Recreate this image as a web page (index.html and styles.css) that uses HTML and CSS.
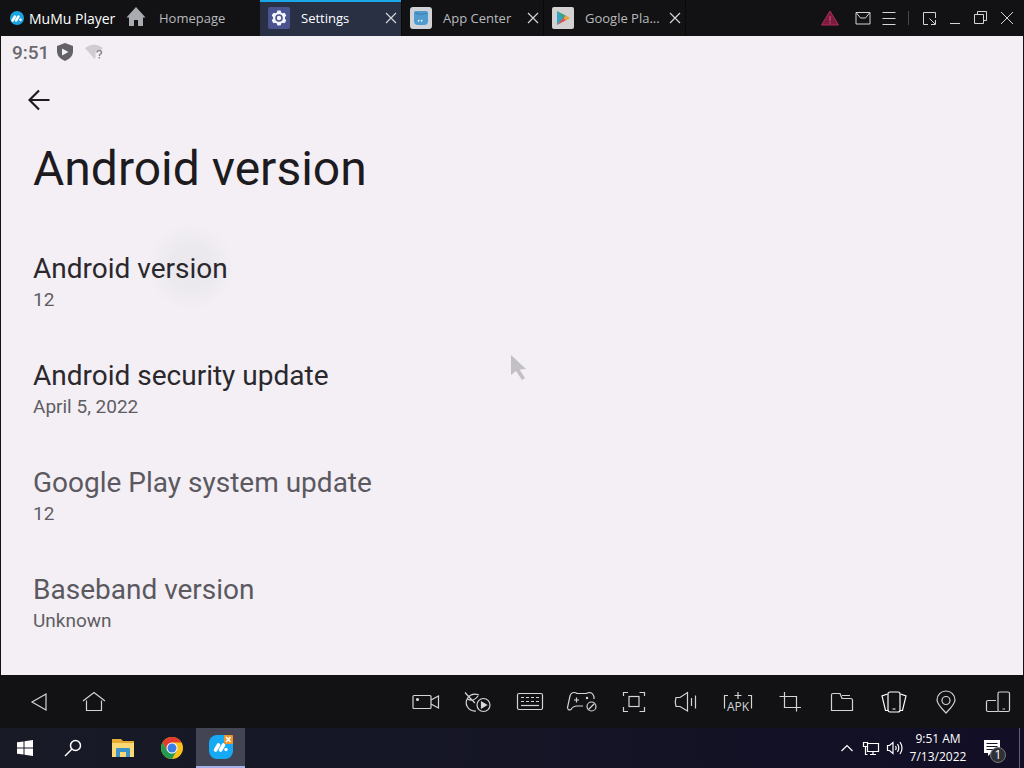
FILE: index.html
```html
<!DOCTYPE html>
<html lang="en">
<head>
<meta charset="utf-8">
<meta name="viewport" content="width=device-width, initial-scale=1">
<title>MuMu Player</title>
<link rel="stylesheet" href="styles.css">
</head>
<body>
<div class="desktop">
  <header class="titlebar">
    <div class="brand">
      <svg width="16" height="16" viewBox="0 0 16 16" aria-hidden="true"><circle cx="8" cy="8" r="7" fill="#1aa6e2"/><path d="M3.500 10.500 6 6.500M7 10.500 9.500 6.500" stroke="#fff" stroke-width="2.400" stroke-linecap="round"/><circle cx="11.500" cy="9.800" r="1.300" fill="#fff"/></svg>
      <span>MuMu Player</span>
    </div>
    <nav class="tabs" aria-label="Tabs">
      <div class="tab tab-home">
        <button class="tab-main tab-main-home" type="button">
          <svg width="20" height="22" viewBox="0 0 20 22" aria-hidden="true"><path d="M10 0 .5 10.500H3V19H8V13H12V19H17V10.500H19.500Z" fill="#a9abb0"/></svg>
          <span>Homepage</span>
        </button>
      </div>
      <div class="tab tab-active">
        <button class="tab-main" type="button">
          <svg width="22" height="22" viewBox="0 0 22 22" aria-hidden="true"><rect width="22" height="22" rx="2" fill="#4a5390"/><g fill="#f4f5fb"><circle cx="11" cy="11" r="6"/><rect x="9" y="3.500" width="4" height="15" rx="1"/><rect x="9" y="3.500" width="4" height="15" rx="1" transform="rotate(60 11 11)"/><rect x="9" y="3.500" width="4" height="15" rx="1" transform="rotate(120 11 11)"/></g><circle cx="11" cy="11" r="3" fill="#f4f5fb" stroke="#4a5390" stroke-width="1.600"/></svg>
          <span>Settings</span>
        </button>
        <button class="tab-close" type="button" aria-label="Close Settings"><svg width="12" height="12" viewBox="0 0 12 12"><path d="M1 1 11 11M11 1 1 11"/></svg></button>
      </div>
      <div class="tab">
        <button class="tab-main" type="button">
          <svg width="22" height="22" viewBox="0 0 22 22" aria-hidden="true"><rect width="22" height="22" rx="3" fill="#cfd3d8"/><path d="M4 6Q4 4 6 4H16Q18 4 18 6V14Q18 18 14 18H8Q4 18 4 14Z" fill="#4f9bcd"/><path d="M5 6Q11 9 17 6" fill="none" stroke="#3a7fb5"/><path d="M8 14.500 9.300 13M11 14.500 12.300 13" stroke="#d8eefa" stroke-width="1.500"/></svg>
          <span>App Center</span>
        </button>
        <button class="tab-close" type="button" aria-label="Close App Center"><svg width="12" height="12" viewBox="0 0 12 12"><path d="M1 1 11 11M11 1 1 11"/></svg></button>
      </div>
      <div class="tab">
        <button class="tab-main" type="button">
          <svg width="22" height="22" viewBox="0 0 22 22" aria-hidden="true"><rect width="22" height="22" rx="2" fill="#d3d1d2"/><path d="M5 4V18L12.500 11Z" fill="#35a3c4"/><path d="M5 4 14 8.800 11.500 11.500Z" fill="#3aa37a"/><path d="M5 18 14 13.200 11.500 10.500Z" fill="#d4574e"/><path d="M14 8.600 18 11 14 13.400 11.500 11Z" fill="#e5a53a"/></svg>
          <span>Google Pla...</span>
        </button>
        <button class="tab-close" type="button" aria-label="Close Google Play"><svg width="12" height="12" viewBox="0 0 12 12"><path d="M1 1 11 11M11 1 1 11"/></svg></button>
      </div>
    </nav>
    <div class="window-tools">
      <button class="tool tool-alert" type="button" aria-label="Warning"><svg width="20" height="18" viewBox="0 0 20 18"><path d="M10 2 18.500 16H1.500Z"/><path d="M10 7V12M10 13V14.500" class="alert-mark"/></svg></button>
      <button class="tool" type="button" aria-label="Messages"><svg width="18" height="16" viewBox="0 0 18 16"><path d="M2 2.500H16V14H2ZM2.500 3 6.500 8H11.500L15.500 3"/></svg></button>
      <button class="tool" type="button" aria-label="Menu"><svg width="16" height="16" viewBox="0 0 16 16"><path d="M1.500 2.500H14.500M1.500 8.500H14.500M1.500 14.500H14.500"/></svg></button>
      <span class="tool-sep"></span>
      <button class="tool" type="button" aria-label="Resize"><svg width="16" height="16" viewBox="0 0 16 16"><path d="M7 14.500H2.500V2.500H14.500V8M8.500 8.500 14 14M14.500 10V14.500H10"/></svg></button>
      <button class="tool" type="button" aria-label="Minimize"><svg width="16" height="16" viewBox="0 0 16 16"><path d="M3 13.500H13"/></svg></button>
      <button class="tool" type="button" aria-label="Restore"><svg width="16" height="16" viewBox="0 0 16 16"><path d="M1.500 4.500H10.500V13.500H1.500ZM4.500 4V1.500H13.500V10.500H11"/></svg></button>
      <button class="tool" type="button" aria-label="Close"><svg width="16" height="16" viewBox="0 0 16 16"><path d="M2 2 14 14M14 2 2 14"/></svg></button>
    </div>
  </header>

  <main class="screen">
    <div class="status">
      <span>9:51</span>
      <svg width="16" height="18" viewBox="0 0 16 18" aria-hidden="true"><path d="M8 0 16 3V9Q15.500 15 8 18 .5 15 0 9V3Z" fill="#626166"/><path d="M5 5.500V12.500L11.500 9Z" fill="#f3eff5"/></svg>
      <svg width="18" height="16" viewBox="0 0 18 16" aria-hidden="true"><path d="M0 4Q9-3 18 4L16 6Q11 5 10.500 9V13.500L9.500 15Z" fill="#cfcdd1"/><path d="M12 8.500Q12 6.500 14.200 6.500 16.500 6.500 16.500 8.500 16.500 9.700 15 10.500 14.300 11 14.300 12M14.300 13V14.500" fill="none" stroke="#88878b" stroke-width="1.500"/></svg>
    </div>
    <button class="back" type="button" aria-label="Back"><svg width="22" height="22" viewBox="0 0 22 22"><path d="M11 1.500 1.500 11 11 20.500M1.500 11H21.500" fill="none" stroke="#1d1b20" stroke-width="2.200"/></svg></button>
    <h1 class="title">Android version</h1>
    <dl class="list">
      <div class="row"><dt>Android version</dt><dd>12</dd></div>
      <div class="row"><dt>Android security update</dt><dd>April 5, 2022</dd></div>
      <div class="row row-muted"><dt>Google Play system update</dt><dd>12</dd></div>
      <div class="row row-muted"><dt>Baseband version</dt><dd>Unknown</dd></div>
    </dl>
    <svg class="pointer" width="20" height="28" viewBox="0 0 20 28" aria-hidden="true"><path d="M2 1V21L7 17 13 26 16 24 10.500 15.500 17 15Z" fill="#c2c0c4"/></svg>
  </main>

  <footer class="toolbar">
    <div class="nav-tools">
      <button class="nav-button" type="button" aria-label="Back"><svg width="18" height="20" viewBox="0 0 18 20"><path d="M16 2V18L2 10Z"/></svg></button>
      <button class="nav-button" type="button" aria-label="Home"><svg width="24" height="22" viewBox="0 0 24 22"><path d="M1 10 12 1.500 23 10M4.500 9.500V19.500H19.500V9.500"/></svg></button>
    </div>
    <div class="device-tools">
      <button type="button" aria-label="Record video"><svg width="30" height="26" viewBox="0 0 30 26"><rect x="2" y="6.500" width="18" height="13" rx="1"/><path d="M20 11 27.500 7V19L20 15"/><circle cx="6.500" cy="10.500" r="1" fill="#e0e0e0"/></svg></button>
      <button type="button" aria-label="Operation recorder"><svg width="30" height="26" viewBox="0 0 30 26"><path d="M2 3.500 6 8M16 6Q9 3.500 5 8.500 1.500 13.500 4.500 18 7.500 22.500 13 22M4.500 10Q10 13.500 15 7M6 8 12 14"/><circle cx="20.500" cy="16" r="6.500"/><path d="M18.500 13V19L23.500 16Z" fill="#e0e0e0"/></svg></button>
      <button type="button" aria-label="Keyboard"><svg width="30" height="26" viewBox="0 0 30 26"><rect x="2.500" y="4.500" width="25" height="16" rx="1.500"/><path d="M6 8.500H24M6 12.500H24" stroke-dasharray="3 2"/><path d="M6 16.500H24"/></svg></button>
      <button type="button" aria-label="Gamepad"><svg width="32" height="26" viewBox="0 0 32 26"><path d="M17 17H11Q7 17 5 20.500 2 22 1.500 18.500L4 7Q5 3.500 8 3.500 10 3.500 11 4.500H20Q22 3.500 24 3.500 27 4 28 8V10M8 11H13M10.500 8.500V13.500"/><circle cx="21" cy="9" r=".6"/><circle cx="25.500" cy="17.500" r="4.500"/><path d="M22.500 20.500 28.500 14.500"/></svg></button>
      <button type="button" aria-label="Full screen"><svg width="26" height="26" viewBox="0 0 26 26"><rect x="8" y="7.500" width="10" height="10"/><path d="M2.500 7V3.500H7M18.500 3.500H23.500V7M2.500 18V22.500H7M18.500 22.500H23.500V18"/></svg></button>
      <button type="button" aria-label="Volume"><svg width="26" height="26" viewBox="0 0 26 26"><path d="M3 8.500H7L14.500 3.500V22L7 17.500H3Q1.500 13 3 8.500ZM18.500 9V17M22.500 6.500V19.500"/></svg></button>
      <button type="button" aria-label="Install APK"><svg width="30" height="26" viewBox="0 0 30 26"><path d="M5 6.500H1.500V19.500M25 6.500H28.500V19.500M11.500 6.500H18.500M15 3V10"/><text x="15" y="22" text-anchor="middle">APK</text></svg></button>
      <button type="button" aria-label="Screenshot"><svg width="26" height="26" viewBox="0 0 26 26"><path d="M2.500 7.500H19.500V22.500M7.500 3V18.500H24"/></svg></button>
      <button type="button" aria-label="Shared folder"><svg width="26" height="26" viewBox="0 0 26 26"><path d="M2.500 21.500V6Q2.500 4.500 4 4.500H11L13 9.500H21.500Q23.500 9.500 23.500 11V21.500ZM13 6.500H21"/></svg></button>
      <button type="button" aria-label="Shake"><svg class="bright" width="28" height="26" viewBox="0 0 28 26"><rect x="8" y="3" width="12" height="20" rx="2"/><path d="M12.500 20H15.500M7.500 5 2 7 5.500 21.500H8M20.500 5 26 7 22.500 21.500H20"/></svg></button>
      <button type="button" aria-label="Location"><svg width="24" height="26" viewBox="0 0 24 26"><path d="M12 24Q3 15 3 11A9 9 0 0 1 21 11Q21 15 12 24Z"/><circle cx="12" cy="11.500" r="4"/></svg></button>
      <button type="button" aria-label="Rotate"><svg width="26" height="26" viewBox="0 0 26 26"><rect x="13" y="3" width="11.500" height="19.500" rx="1.500"/><path d="M11 11.500H3Q1.500 11.500 1.500 13V21Q1.500 22.500 3 22.500H13M17.500 20H20"/></svg></button>
    </div>
  </footer>

  <div class="taskbar">
    <div class="apps">
      <button type="button" aria-label="Start"><svg width="16" height="16" viewBox="0 0 16 16"><path d="M0 2.300 6.500 1.400V7.500H0ZM7.500 1.200 16 0V7.500H7.500ZM0 8.500H6.500V14.600L0 13.700ZM7.500 8.500H16V16L7.500 14.800Z" fill="#fff"/></svg></button>
      <button type="button" aria-label="Search"><svg width="20" height="18" viewBox="0 0 20 18"><circle cx="11.500" cy="6.500" r="5" fill="none" stroke="#fff" stroke-width="1.500"/><path d="M8 10 1 17" stroke="#fff" stroke-width="1.500"/></svg></button>
      <button type="button" aria-label="File Explorer"><svg width="22" height="20" viewBox="0 0 22 20"><path d="M0 1H9L11 3H22V19H0Z" fill="#e5ac35"/><path d="M0 5H22V19H0Z" fill="#fbd873"/><path d="M4 11Q4 10 5 10H17Q18 10 18 11V19H14V14H8V19H4Z" fill="#3b94c9"/></svg></button>
      <button type="button" aria-label="Google Chrome"><svg width="24" height="24" viewBox="0 0 24 24"><circle cx="12" cy="12" r="11" fill="#fbc116"/><path d="M12 12V6.500H21.500A11 11 0 0 0 2.500 6.500L7.200 14.700Z" fill="#e33b2e"/><path d="M2.500 6.500 7.200 14.700 12 17.500 16.800 14.700 12 23A11 11 0 0 1 2.500 6.500Z" fill="#229b52"/><circle cx="12" cy="12" r="5.500" fill="#fff"/><circle cx="12" cy="12" r="4.500" fill="#3c7de6"/></svg></button>
      <button class="app-active" type="button" aria-label="MuMu Player"><svg width="26" height="26" viewBox="0 0 26 26"><rect x="1" y="1" width="24" height="24" rx="8" fill="#16aaf5"/><path d="M7.500 16 10.500 11M12.500 16 15.500 11" stroke="#fff" stroke-width="3.600" stroke-linecap="round"/><circle cx="18" cy="15.500" r="1.700" fill="#fff"/><rect x="16" y="1" width="9" height="9" rx="1" fill="#f0932b"/><path d="M18 3 22.500 8M22.500 3 18 8" stroke="#fff" stroke-width="1.600"/></svg></button>
    </div>
    <div class="tray">
      <button type="button" aria-label="Show hidden icons"><svg width="14" height="10" viewBox="0 0 14 10"><path d="M1.500 8 7 2.500 12.500 8"/></svg></button>
      <button type="button" aria-label="Network"><svg width="18" height="16" viewBox="0 0 18 16"><path d="M6 3.500H16.500V11.500H5.500V7M8 14.500H14M11 11.500V14.500M1.500 2.500H5.500V6.500H1.500ZM3.500 6.500V14.500H5.500"/></svg></button>
      <button type="button" aria-label="Sound"><svg width="18" height="16" viewBox="0 0 18 16"><path d="M1.500 5.500H3.500L7 2.500V13.500L3.500 10.500H1.500ZM9.500 6Q10.800 8 9.500 10M11.500 4Q14 8 11.500 12M14 2Q18 8 14 14"/></svg></button>
      <button class="clock" type="button"><span>9:51 AM</span><span>7/13/2022</span></button>
      <button class="notice" type="button" aria-label="Notifications"><svg width="18" height="18" viewBox="0 0 18 18"><path d="M1 1H17V14H8L5 17V14H1Z" fill="#fff" stroke="none"/><path d="M3.500 4.500H14.500M3.500 7.500H14.500M3.500 10.500H11" stroke="#15152c"/></svg><span class="badge">1</span></button>
    </div>
  </div>
</div>
</body>
</html>
```
FILE: styles.css
```css
* { box-sizing: border-box; }
body { margin: 0; font-family: "Open Sans", "Noto Sans", sans-serif; background: #121214; }
button { margin: 0; padding: 0; border: 0; background: none; color: inherit; font: inherit; display: flex; align-items: center; justify-content: center; }
svg { display: block; flex: none; }

.desktop { display: flex; flex-direction: column; min-height: 100vh; }

.titlebar { display: flex; height: 36px; background: #121214; color: #b9babd; font: 13px "Open Sans", "Noto Sans", sans-serif; }
.brand { display: flex; align-items: center; gap: 4px; width: 126px; padding-left: 9px; color: #fff; font-size: 14px; white-space: nowrap; }
.tabs { display: flex; }
.tab { display: flex; align-items: center; width: 142px; padding-left: 8px; border-right: 1px solid #09090a; }
.tab-home { width: 134px; padding-left: 0; border-right: 0; }
.tab-main { flex: 1; gap: 11px; height: 100%; justify-content: flex-start; white-space: nowrap; }
.tab-main-home { gap: 13px; }
.tab-active { background: #2a3044; color: #fff; box-shadow: inset 0 2px #1ba6e8; }
.tab-close { width: 20px; height: 20px; }
.tab-close path { stroke: #d4d5d8; stroke-width: 1.2; }
.window-tools { display: flex; align-items: center; margin-left: auto; padding-right: 4px; }
.tool { width: 26px; height: 36px; }
.tool path { fill: none; stroke: #d4d4d6; }
.tool-alert { margin-right: 7px; }
.tool-alert path { fill: #7a1b3f; stroke: #b02a58; }
.tool-alert .alert-mark { stroke: #d8587f; }
.tool-sep { width: 1px; height: 14px; margin: 0 7px 0 6px; background: #48484c; }

.screen { position: relative; flex: 1; padding: 0 32px 24px; background: #f3eff5; border: solid #121214; border-width: 0 1px; font-family: Roboto, sans-serif; color: #1d1b20; }
.status { display: flex; align-items: center; gap: 8px; height: 32px; margin-left: -21px; font-size: 19px; font-weight: 500; color: #6a696e; }
.status svg:last-child { margin-left: 4px; }
.back { width: 32px; height: 32px; margin: 16px 0 0 -10px; }
.title { margin: 25px 0 0; font-size: 48px; font-weight: 400; line-height: 56px; }
.list { display: grid; gap: 45px; margin: 24px 0 0; padding-top: 30px; background: radial-gradient(circle at 158px 46px, #ece9ee 0, #ece9ee 20px, #f3eff5 44px); }
.row dt { font-size: 28px; line-height: 36px; color: #2a282d; }
.row dd { margin: 0; font-size: 19px; line-height: 26px; color: #5f5d63; }
.row-muted dt { color: #5b595f; }
.pointer { position: absolute; left: calc(50% - 3px); top: 318px; }

.toolbar { display: flex; justify-content: space-between; height: 53px; background: #121214; }
.toolbar button { width: 52px; height: 53px; }
.toolbar svg { fill: none; stroke: #d4d4d5; stroke-width: 1.2; }
.toolbar .bright { stroke: #fff; }
.toolbar text { fill: #d4d4d5; stroke: none; font: 12px "Open Sans", sans-serif; }
.toolbar .nav-tools { display: flex; padding-left: 11px; }
.toolbar .nav-button { width: 55px; }
.device-tools { display: flex; }

.taskbar { display: flex; justify-content: space-between; height: 40px; background: linear-gradient(90deg, #181a26, #141426 60%, #110e25); color: #fff; }
.apps { display: flex; }
.apps button { width: 49px; height: 40px; }
.apps .app-active { background: #444554; border-bottom: 2px solid #a5b0e8; }
.tray { display: flex; margin-right: 4px; border-right: 1px solid #62616d; }
.tray button { width: 24px; height: 40px; }
.tray svg { fill: none; stroke: #fff; stroke-width: 1.2; }
.tray .clock { width: 62px; flex-direction: column; font: 12px/18px "Open Sans", sans-serif; white-space: nowrap; }
.tray .notice { position: relative; width: 50px; padding-right: 5px; }
.badge { position: absolute; left: 21px; top: 19px; width: 16px; height: 16px; border: 1px solid #77777c; border-radius: 50%; background: #303038; font-size: 12px; line-height: 14px; text-align: center; }
```
